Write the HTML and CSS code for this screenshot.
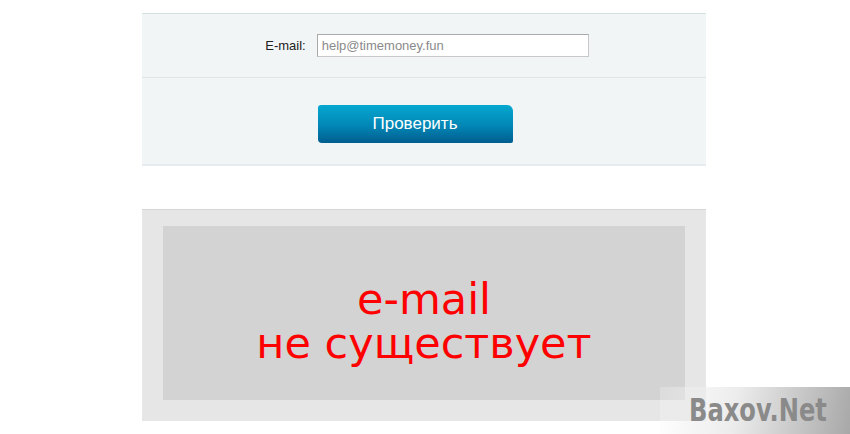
FILE: index.html
```html
<!DOCTYPE html>
<html lang="ru">
<head>
  <meta charset="UTF-8">
  <meta name="viewport" content="width=device-width, initial-scale=1.0">
  <title>Проверка e-mail</title>
  <link rel="stylesheet" href="styles.css">
</head>
<body>

  <div class="page">
    <div class="check-form">
      <div class="form-row">
        <label class="form-label" for="email">E-mail:</label>
        <input class="form-input" id="email" type="text" value="help@timemoney.fun">
      </div>
      <div class="form-row form-row--submit">
        <button class="btn">Проверить</button>
      </div>
    </div>

    <div class="result">
      <div class="result-box">
        <p class="result-text">e-mail<br>не существует</p>
      </div>
    </div>
  </div>

  <div class="watermark"><span class="watermark-text">Baxov.Net</span></div>

</body>
</html>
```

FILE: styles.css
```css
body{
  background-color:white;
  margin:0;
  font-family:"Liberation Sans", Arial, sans-serif;
}
.page{
  width:564px;
  margin-left:142px;
  padding-top:13px;
}
.check-form{
  background-color:#f2f5f6;
  border-top:1px solid #d5e0e4;
  border-bottom:2px solid #e6ecee;
}
.form-row{
  display:flex;
  align-items:center;
  justify-content:center;
  height:63px;
  padding-left:6px;
  border-bottom:1px solid #dfe5e7;
}
.form-row--submit{
  height:86px;
  padding-left:0;
  padding-right:18px;
  border-bottom:none;
}
.form-label{
  font-size:13px;
  color:#222;
  margin-right:11px;
}
.form-input{
  width:262px;
  height:21px;
  padding:0 4px;
  border:1px solid #c8c8c8;
  border-top-color:#a9a9a9;
  border-left-color:#a9a9a9;
  font-family:"Liberation Sans", Arial, sans-serif;
  font-size:13px;
  color:#8a8a8a;
  background:white;
}
.btn{
  width:195px;
  height:38px;
  margin-top:6px;
  border:none;
  border-radius:3px 6px 2px 4px;
  background:linear-gradient(#05a8d0, #0286b5 55%, #005e8f);
  color:white;
  font-family:"Liberation Sans", Arial, sans-serif;
  font-size:17px;
  cursor:pointer;
}
.result{
  margin-top:43px;
  background-color:#e6e6e6;
  border-top:1px solid #d6d6d6;
  padding:16px 21px 21px 21px;
}
.result-box{
  background-color:#d3d3d3;
  height:174px;
  display:flex;
  align-items:center;
  justify-content:center;
}
.result-text{
  margin:0;
  padding-top:16px;
  color:#ff0000;
  font-family:"DejaVu Sans", Verdana, sans-serif;
  font-size:43px;
  line-height:44px;
  text-align:center;
}
.watermark{
  position:absolute;
  left:660px;
  top:387px;
  width:190px;
  height:47px;
  padding-left:29px;
  box-sizing:border-box;
  background:linear-gradient(100deg, rgba(255,255,255,0.2), rgba(235,235,235,0.95) 40%, #a8a8a8);
}
.watermark-text{
  display:inline-block;
  transform:scaleX(0.84);
  transform-origin:left center;
  font-family:"DejaVu Sans Condensed", "DejaVu Sans", sans-serif;
  font-weight:bold;
  font-size:32px;
  line-height:47px;
  color:#8a8a8a;
}
```
